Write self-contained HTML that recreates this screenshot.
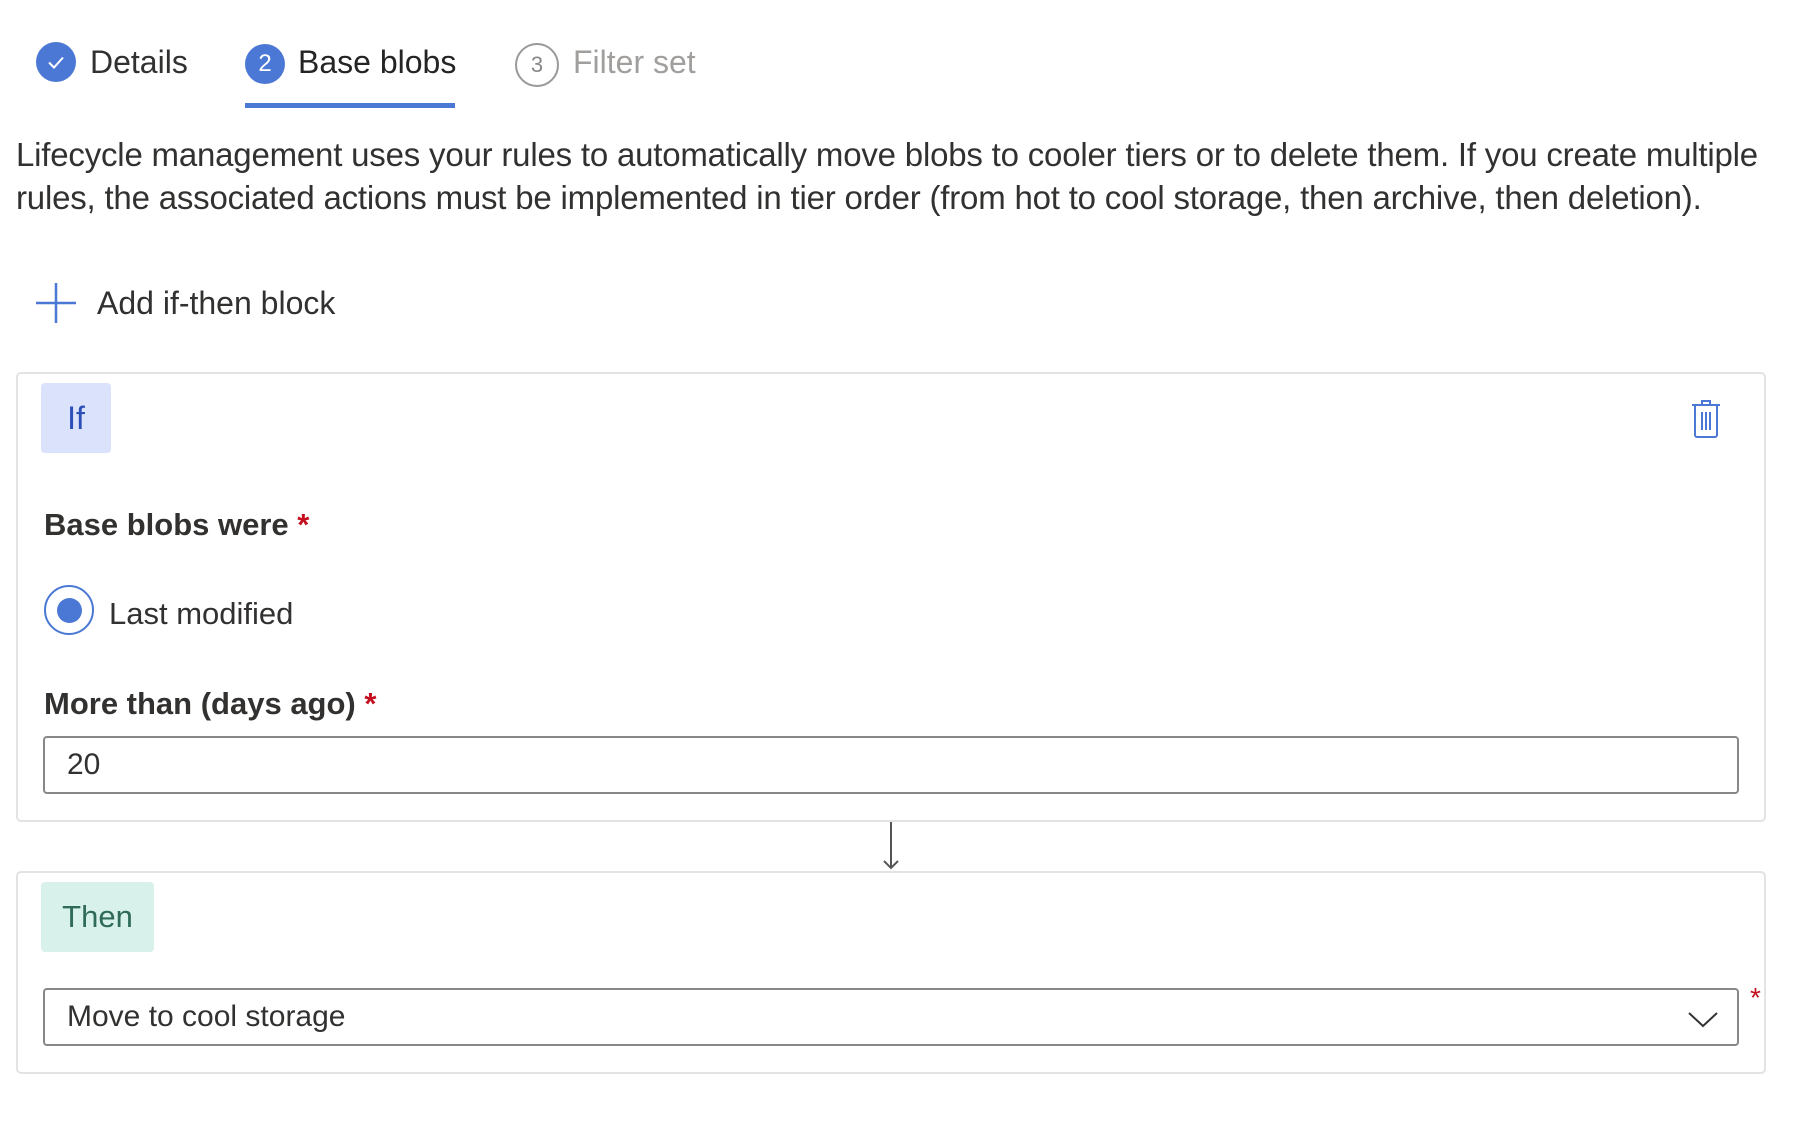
<!DOCTYPE html>
<html><head><meta charset="utf-8"><style>
*{margin:0;padding:0;box-sizing:border-box}
body{width:1820px;height:1122px;background:#fff;font-family:"Liberation Sans",sans-serif;color:#323130;position:relative;overflow:hidden}
.a{position:absolute;white-space:nowrap}
.circ{position:absolute;border-radius:50%;display:flex;align-items:center;justify-content:center}
.box{position:absolute;left:16px;width:1750px;border:2px solid #e3e3e3;border-radius:5px}
.inp{position:absolute;left:43px;width:1696px;height:58px;border:2px solid #8a8886;border-radius:4px;font-size:30px;display:flex;align-items:center;padding-left:22px}
.star{color:#c50f1f}
</style></head><body>
<div class="circ" style="left:36px;top:42px;width:40px;height:40px;background:#4a78d4"><svg width="22" height="22" viewBox="0 0 22 22"><path d="M4 11.5l5 5 9-10" stroke="#fff" stroke-width="2" fill="none"/></svg></div>
<div class="a" style="left:90px;top:44px;font-size:32px">Details</div>
<div class="circ" style="left:245px;top:44px;width:40px;height:40px;background:#4a78d4;color:#fff;font-size:24px">2</div>
<div class="a" style="left:298px;top:44px;font-size:32px;color:#242424">Base blobs</div>
<div class="a" style="left:245px;top:103px;width:210px;height:5px;background:#4a78d4"></div>
<div class="circ" style="left:515px;top:43px;width:44px;height:44px;border:2px solid #999;color:#8a8886;font-size:22px">3</div>
<div class="a" style="left:573px;top:44px;font-size:32px;color:#a19f9d">Filter set</div>
<div class="a" style="left:16px;top:133px;font-size:33px;line-height:43px;letter-spacing:-0.2px">Lifecycle management uses your rules to automatically move blobs to cooler tiers or to delete them. If you create multiple<br>rules, the associated actions must be implemented in tier order (from hot to cool storage, then archive, then deletion).</div>
<svg class="a" style="left:34px;top:281px" width="44" height="44"><path d="M22 2v40M2 22h40" stroke="#4a78d4" stroke-width="2.5"/></svg>
<div class="a" style="left:97px;top:285px;font-size:32px">Add if-then block</div>
<div class="box" style="top:372px;height:450px"></div>
<div class="a" style="left:41px;top:383px;width:70px;height:70px;background:#dbe2fb;border-radius:4px;color:#2b4fb7;font-size:32px;display:flex;align-items:center;justify-content:center">If</div>
<svg class="a" style="left:1690px;top:399px" width="32" height="40" viewBox="0 0 32 40"><path d="M2 6h28M12 6V2h8v4M5 6v30a2 2 0 0 0 2 2h18a2 2 0 0 0 2-2V6M12 13v18M16 13v18M20 13v18" stroke="#4a78d4" stroke-width="2" fill="none"/></svg>
<div class="a" style="left:44px;top:507px;font-size:31px;font-weight:bold;color:#323130">Base blobs were <span class="star">*</span></div>
<div class="circ" style="left:44px;top:585px;width:50px;height:50px;border:2px solid #4a78d4"><div style="width:25px;height:25px;border-radius:50%;background:#4a78d4"></div></div>
<div class="a" style="left:109px;top:596px;font-size:31px">Last modified</div>
<div class="a" style="left:44px;top:686px;font-size:31px;font-weight:bold">More than (days ago) <span class="star">*</span></div>
<div class="inp" style="top:736px">20</div>
<svg class="a" style="left:881px;top:822px" width="20" height="50"><path d="M10 0v46M3 39l7 7 7-7" stroke="#555" stroke-width="2" fill="none"/></svg>
<div class="box" style="top:871px;height:203px"></div>
<div class="a" style="left:41px;top:882px;width:113px;height:70px;background:#d8f1ea;border-radius:4px;color:#2f6b58;font-size:31px;display:flex;align-items:center;justify-content:center">Then</div>
<div class="inp" style="top:988px">Move to cool storage</div>
<svg class="a" style="left:1687px;top:1009px" width="32" height="20"><path d="M2 4l14 13 14-13" stroke="#333" stroke-width="2" fill="none"/></svg>
<div class="a star" style="left:1750px;top:982px;font-size:28px">*</div>
</body></html>
